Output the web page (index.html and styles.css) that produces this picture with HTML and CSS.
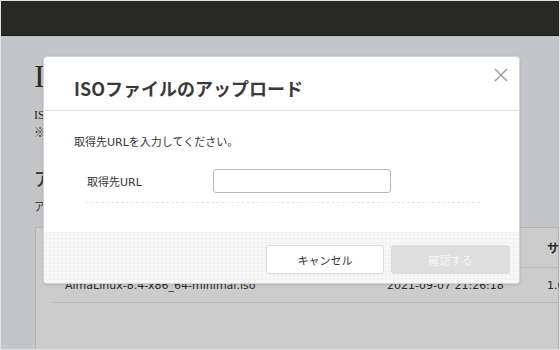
FILE: index.html
```html
<!DOCTYPE html>
<html lang="ja">
<head>
<meta charset="utf-8">
<title>ISOファイルのアップロード</title>
<link rel="stylesheet" href="styles.css">
</head>
<body>
<div class="frame">
  <header class="topbar"></header>
  <main class="page">
    <h1 class="page-title">ISOイメージ</h1>
    <p class="lead">ISOイメージをアップロードして、サーバーにインストールできます。<br>※ アップロードには時間がかかる場合があります。</p>
    <h2 class="section-title">アップロード済みのISOイメージ</h2>
    <p class="note">アップロードしたISOイメージの一覧です。</p>
    <div class="panel">
      <div class="row row-head">
        <span>ファイル名</span>
        <span>アップロード日時</span>
        <span>サイズ</span>
      </div>
      <div class="row">
        <span>AlmaLinux-8.4-x86_64-minimal.iso</span>
        <span>2021-09-07 21:26:18</span>
        <span>1.6 GB</span>
      </div>
    </div>
  </main>
  <div class="backdrop"></div>
  <div class="modal">
    <div class="modal-header">
      <h3 class="modal-title">ISOファイルのアップロード</h3>
      <button class="close" aria-label="閉じる">
        <svg width="14" height="14" viewBox="0 0 14 14"><path d="M1 1 L13 13 M13 1 L1 13" stroke="#a3a3a3" stroke-width="1.6" fill="none"/></svg>
      </button>
    </div>
    <div class="modal-body">
      <p class="modal-text">取得先URLを入力してください。</p>
      <div class="form-row">
        <label class="form-label" for="url">取得先URL</label>
        <input class="form-input" id="url" type="text">
      </div>
    </div>
    <div class="modal-footer">
      <button class="btn btn-cancel">キャンセル</button>
      <button class="btn btn-confirm" disabled>確認する</button>
    </div>
  </div>
</div>
</body>
</html>
```
FILE: styles.css
```css
* { box-sizing: border-box; }
html, body { margin: 0; padding: 0; }
body {
  background: #e2e2e2;
  padding: 1px;
  font-family: "DejaVu Sans", "Noto Sans CJK JP", sans-serif;
}
.frame {
  position: relative;
  height: 348px;
  overflow: hidden;
  background: #f6f7fa;
}
.topbar {
  height: 35px;
  background: #32322f;
  border-bottom: 1px solid #1f1f1d;
}
.page {
  padding: 20px 0 0 33px;
  color: #353535;
}
.page-title {
  margin: 0;
  font-family: "Liberation Serif", "Noto Sans CJK JP", serif;
  font-weight: normal;
  font-size: 32px;
  line-height: 40px;
}
.lead {
  margin: 10px 0 0;
  font-family: "Liberation Serif", "Noto Sans CJK JP", serif;
  font-size: 12px;
  line-height: 18px;
}
.section-title {
  margin: 24px 0 0;
  font-family: "Noto Sans CJK JP", sans-serif;
  font-size: 18px;
  font-weight: 500;
  line-height: 24px;
  color: #444;
}
.note {
  margin: 8px 0 0;
  font-family: "Noto Sans CJK JP", sans-serif;
  font-size: 11px;
  line-height: 16px;
}
.panel {
  margin-top: 13px;
  margin-left: 1px;
  background: #fff;
  border: 1px solid #e0e0e0;
  padding: 0 0 0 17px;
  height: 140px;
}
.row {
  display: grid;
  grid-template-columns: 322px 160px auto;
  padding-left: 12px;
  font-size: 11px;
  color: #353535;
  border-bottom: 1px solid #e6e6e6;
  height: 35px;
  align-items: center;
  white-space: nowrap;
}
.row-head {
  height: 40px;
  font-weight: bold;
  font-family: "Noto Sans CJK JP", sans-serif;
  font-size: 12px;
}
.backdrop {
  position: absolute;
  inset: 0;
  background: rgba(0, 0, 0, 0.2);
}
.modal {
  position: absolute;
  left: 42px;
  top: 55px;
  width: 477px;
  background: #fff;
  border: 1px solid #d4d4d4;
  border-radius: 4px;
  box-shadow: 0 1px 3px rgba(0, 0, 0, 0.12);
  overflow: hidden;
}
.modal-header {
  position: relative;
  height: 54px;
  border-bottom: 1px solid #dddddd;
  padding: 19px 0 0 30px;
}
.modal-title {
  margin: 0;
  font-family: "Noto Sans CJK JP", sans-serif;
  font-size: 18px;
  font-weight: 700;
  line-height: 24px;
  color: #3a3a3a;
}
.close {
  position: absolute;
  top: 11px;
  right: 11px;
  width: 14px;
  height: 14px;
  padding: 0;
  border: 0;
  background: none;
  display: block;
}
.close svg { display: block; }
.modal-body {
  padding: 24px 10px 29px 30px;
}
.modal-text {
  margin: 0;
  font-size: 11px;
  line-height: 16px;
  color: #333;
}
.form-row {
  display: flex;
  align-items: center;
  margin: 18px 29px 0 12px;
  padding-bottom: 9px;
  border-bottom: 1px dashed #e6e6e6;
}
.form-label {
  width: 127px;
  padding-left: 1px;
  font-size: 11px;
  color: #333;
}
.form-input {
  width: 178px;
  height: 24px;
  border: 1px solid #b8b8b8;
  border-radius: 3px;
  margin: 0;
  padding: 0 6px;
  background: #fff;
}
.modal-footer {
  display: flex;
  justify-content: flex-end;
  gap: 7px;
  height: 51px;
  padding: 12px 9px 0 0;
  background-color: #f7f7f7;
  background-image: radial-gradient(circle, #ececec 0.6px, transparent 0.9px);
  background-size: 4px 4px;
  border-top: 1px solid #f2f2f2;
}
.btn {
  width: 118px;
  height: 29px;
  border-radius: 3px;
  font-family: "DejaVu Sans", "Noto Sans CJK JP", sans-serif;
  font-size: 11px;
  padding: 0;
}
.btn-cancel {
  background: #fff;
  border: 1px solid #dcdcdc;
  color: #333;
}
.btn-confirm {
  width: 119px;
  background: #dedede;
  border: 1px solid #dedede;
  color: #f6f6f6;
}
```
